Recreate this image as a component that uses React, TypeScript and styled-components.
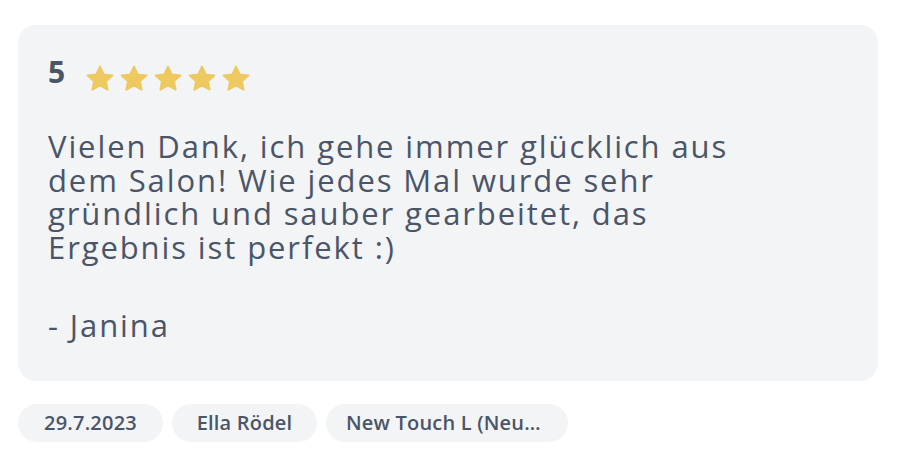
import React from 'react';
import styled, { createGlobalStyle } from 'styled-components';

const TEXT_COLOR = '#4b5568';
const SURFACE = '#f3f4f6';
const STAR_COLOR = '#edc960';

const GlobalStyle = createGlobalStyle`
  html, body {
    margin: 0;
    background: #ffffff;
  }
  body {
    font-family: 'Open Sans', 'DejaVu Sans', sans-serif;
    color: ${TEXT_COLOR};
  }
`;

const Page = styled.div`
  padding: 25px 18px;
  display: flex;
  flex-direction: column;
  gap: 23px;
`;

const Card = styled.div`
  width: 860px;
  box-sizing: border-box;
  background: ${SURFACE};
  border-radius: 18px;
  padding: 40px 30px 38px;
`;

const RatingRow = styled.div`
  display: flex;
  align-items: center;
  gap: 21px;
`;

const Score = styled.span`
  font-size: 30px;
  font-weight: 700;
  line-height: 30px;
  margin-top: -12px;
`;

const Stars = styled.div`
  display: flex;
  gap: 6px;
`;

const Body = styled.div`
  margin-top: 39px;
  max-width: 720px;
  font-size: 31px;
  line-height: 33.5px;
  letter-spacing: 1.9px;
`;

const Paragraph = styled.p<{ $gap?: number }>`
  margin: ${(p) => p.$gap ?? 0}px 0 0;
`;

const Chips = styled.div`
  display: flex;
  gap: 9px;
`;

const Chip = styled.span<{ $max?: number }>`
  display: block;
  box-sizing: border-box;
  min-width: 145px;
  max-width: ${(p) => (p.$max ? `${p.$max}px` : 'none')};
  height: 38px;
  line-height: 38px;
  padding: 0 20px;
  border-radius: 19px;
  background: ${SURFACE};
  font-size: 20px;
  font-weight: 600;
  letter-spacing: 0.2px;
  text-align: center;
  white-space: nowrap;
  overflow: hidden;
  text-overflow: ellipsis;
`;

const Star: React.FC = () => (
  <svg width="28" height="26" viewBox="0 0 28 26" aria-hidden="true">
    <path
      fill={STAR_COLOR}
      stroke={STAR_COLOR}
      strokeWidth="2"
      strokeLinejoin="round"
      d="M14 1.6L17.65 9.4L26.3 10.4L19.9 16.3L21.6 24.6L14 20.4L6.4 24.6L8.1 16.3L1.7 10.4L10.35 9.4Z"
    />
  </svg>
);

const App: React.FC = () => (
  <>
    <GlobalStyle />
    <Page>
      <Card>
        <RatingRow>
          <Score>5</Score>
          <Stars>
            {[0, 1, 2, 3, 4].map((i) => (
              <Star key={i} />
            ))}
          </Stars>
        </RatingRow>
        <Body>
          <Paragraph>
            Vielen Dank, ich gehe immer glücklich aus dem Salon! Wie jedes Mal
            wurde sehr gründlich und sauber gearbeitet, das Ergebnis ist
            perfekt :)
          </Paragraph>
          <Paragraph $gap={45}>- Janina</Paragraph>
        </Body>
      </Card>
      <Chips>
        <Chip>29.7.2023</Chip>
        <Chip>Ella Rödel</Chip>
        <Chip $max={242}>New Touch L (Neukunde)</Chip>
      </Chips>
    </Page>
  </>
);

export default App;
